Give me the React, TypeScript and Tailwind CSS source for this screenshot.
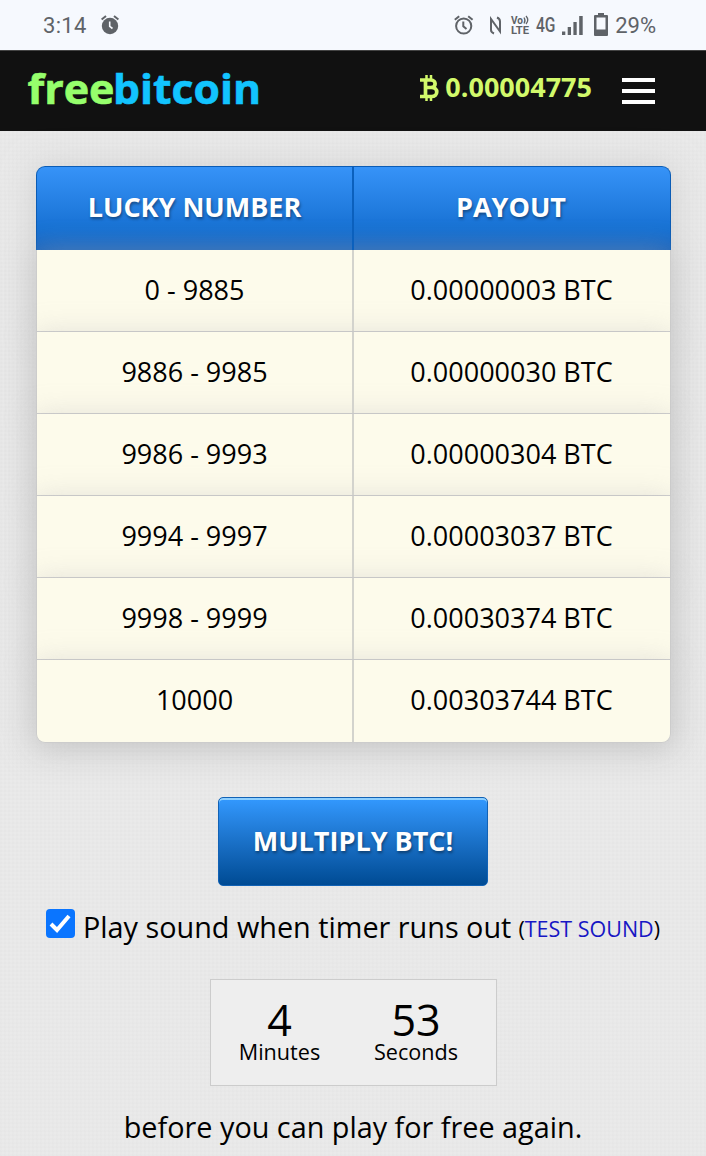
import React from 'react';

const payouts = [
  { range: '0 - 9885', payout: '0.00000003 BTC' },
  { range: '9886 - 9985', payout: '0.00000030 BTC' },
  { range: '9986 - 9993', payout: '0.00000304 BTC' },
  { range: '9994 - 9997', payout: '0.00003037 BTC' },
  { range: '9998 - 9999', payout: '0.00030374 BTC' },
  { range: '10000', payout: '0.00303744 BTC' }
];

const StatusBar = () => (
  <div className="h-[50px] bg-[#f6f9fe] flex items-center justify-between pl-[43px] pr-[50px] text-[#5f6368] font-['Roboto',sans-serif]">
    <div className="flex items-center">
      <span className="text-[22px] leading-none w-[58px] pt-[2px] tracking-[0.3px]">3:14</span>
      <svg width="20" height="20" viewBox="0 0 20 20">
        <circle cx="9" cy="11" r="8.2" fill="currentColor" />
        <path d="M.6 4.500 5 1M17.400 4.500 13 1" stroke="currentColor" strokeWidth="2" />
        <path d="M8.700 6.500V11.300L11.500 13.500" stroke="#f6f9fe" strokeWidth="1.600" fill="none" />
      </svg>
    </div>
    <div className="flex items-center">
      <svg width="20" height="20" viewBox="0 0 20 20" fill="none" stroke="currentColor" strokeWidth="2">
        <circle cx="9.700" cy="11" r="7.600" />
        <path d="M.8 4.800 5.200 1.200M18.600 4.800 14.200 1.200M9.300 6.500V11.300L12.500 14" />
      </svg>
      <svg className="ml-[15px]" width="14" height="19" viewBox="0 0 14 19" fill="none" stroke="currentColor" strokeWidth="2">
        <path d="M5 17.500C2.500 16.500 2 16 2 14V3L11 15.500V5.500C11 3.500 10.500 2.500 8 1.500" />
      </svg>
      <svg className="ml-[7px] overflow-visible" width="20" height="20" viewBox="0 0 20 20" fill="currentColor" fontWeight="700">
        <text x="1" y="9" fontSize="11" textLength="12" lengthAdjust="spacingAndGlyphs">Vo</text>
        <path d="M14 2.500q2 3 0 6M16 1q3.500 4 0 8" fill="none" stroke="currentColor" strokeWidth="1.300" />
        <text x="1" y="19" fontSize="11.5" textLength="18" lengthAdjust="spacingAndGlyphs">LTE</text>
      </svg>
      <svg className="ml-[6px] overflow-visible" width="21" height="20" viewBox="0 0 21 20">
        <text x="0" y="17" fontSize="19.500" fontWeight="500" textLength="19.500" lengthAdjust="spacingAndGlyphs" fill="currentColor">4G</text>
      </svg>
      <svg className="ml-[5px]" width="21" height="19" viewBox="0 0 21 19" fill="currentColor">
        <path d="M0 15.500h3.300v3.500H0zM5.700 11h3.300v8H5.700zM11.400 6h3.300v13h-3.300zM17.200 0h3.500v19h-3.500z" />
      </svg>
      <svg className="ml-[11px]" width="14" height="24" viewBox="0 0 14 24">
        <path d="M4 0h6v2h3a1 1 0 0 1 1 1v19a1 1 0 0 1-1 1H1a1 1 0 0 1-1-1V3a1 1 0 0 1 1-1h3zM2.500 4.500v12h9v-12z" fill="currentColor" fillRule="evenodd" />
      </svg>
      <span className="ml-[7px] text-[22px] leading-none pt-[2px]">29%</span>
    </div>
  </div>
);

const NavBar = () => (
  <header className="h-[81px] bg-[#111] border-t border-[#444] flex items-center justify-between pl-[27px] pr-[51px]">
    <svg width="236" height="60" viewBox="0 0 236 60" className="font-bold" strokeWidth="0.6">
      <text x="0.500" y="42.500" fontSize="40.500" textLength="87" lengthAdjust="spacingAndGlyphs" fill="#96ff6c" stroke="#96ff6c">free</text>
      <text x="86" y="42.500" fontSize="40.500" textLength="148" lengthAdjust="spacingAndGlyphs" fill="#12c4ff" stroke="#12c4ff">bitcoin</text>
    </svg>
    <div className="flex items-center">
      <div className="flex items-center mb-[6px] text-[#d2f96b]">
        <svg width="19" height="26" viewBox="0 0 19 26" fill="none" stroke="currentColor">
          <path d="M0 5h11c5.500 0 5.500 7.500 0 7.500H5h6.500c7 0 7 9 0 9H0M5.500 4.500v17" strokeWidth="3.700" />
          <path d="M6.500 0v4M11 0v4M6.500 22v4M11 22v4" strokeWidth="2.500" />
        </svg>
        <span className="ml-[6px] mb-[4px] text-[27px] leading-none font-bold">0.00004775</span>
      </div>
      <div className="ml-[30px] w-[33px] flex flex-col gap-[7px]">
        <span className="h-[4px] bg-white" />
        <span className="h-[4px] bg-white" />
        <span className="h-[4px] bg-white" />
      </div>
    </div>
  </header>
);

const PayoutTable = () => (
  <div className="mx-[36px] mt-[35px] w-[635px] rounded-[9px] text-center text-[27px] shadow-[0_2px_32px_2px_#bbbbbb80]">
    <div className="grid grid-cols-[317px_1fr] h-[84px] rounded-t-[9px] border border-b-0 border-[#0b5cb5] bg-linear-to-b from-[#3693f8] via-[#1671d3] via-75% to-[#1763bd] text-white font-bold text-shadow-[1px_2px_3px_#0006]">
      <div className="flex items-center justify-center border-r-2 border-[#0b60bd] pb-[3px]">LUCKY NUMBER</div>
      <div className="flex items-center justify-center pb-[3px] pr-[2px]">PAYOUT</div>
    </div>
    {payouts.map((row) => (
      <div
        key={row.range}
        className="grid grid-cols-[317px_1fr] h-[82.1px] border-x border-b border-[#ccc] bg-[#fdfbeb] last:rounded-b-[9px] shadow-[0_4px_30px_2px_#bbbbbb70]"
      >
        <div className="flex items-center justify-center border-r-2 border-[#d3d3cd] pb-px">{row.range}</div>
        <div className="flex items-center justify-center pb-px pr-px">{row.payout}</div>
      </div>
    ))}
  </div>
);

const Timer = () => (
  <div className="mt-[33px] flex w-[287px] h-[107px] border border-[#ccc] bg-[#eee] px-[1px] pt-[10px] text-center">
    <div className="w-[136px]">
      <div className="text-[43px] leading-[59px]">4</div>
      <div className="-mt-[12px] text-[21.6px] leading-[29px]">Minutes</div>
    </div>
    <div className="w-[137px]">
      <div className="text-[43px] leading-[59px]">53</div>
      <div className="-mt-[12px] text-[21.6px] leading-[29px]">Seconds</div>
    </div>
  </div>
);

export default function App() {
  return (
    <div className="w-[706px] h-[1156px] overflow-hidden bg-[#eaeaea] bg-[repeating-linear-gradient(0deg,#00000002_0_2px,transparent_2px_4px),repeating-linear-gradient(90deg,#00000002_0_2px,transparent_2px_4px)] text-black font-['Open_Sans','Noto_Sans',sans-serif]">
      <StatusBar />
      <NavBar />
      <PayoutTable />
      <div className="flex flex-col items-center">
        <button className="mt-[54px] w-[270px] h-[89px] rounded-[5px] border border-[#1262b5] bg-linear-to-b from-[#3399ff] to-[#004b94] text-white font-bold text-[27px] shadow-[inset_0_2px_0_#8fd0ff] text-shadow-[1px_2px_3px_#0006]">
          MULTIPLY BTC!
        </button>
        <label className="mt-[22px] flex items-center h-[38px] whitespace-nowrap">
          <span className="mb-[6px] w-[29px] h-[29px] rounded-[4px] bg-[#0a75ff] flex items-center justify-center">
            <svg width="23" height="21" viewBox="0 0 23 21" fill="none" stroke="#fff" strokeWidth="4">
              <path d="M2 11 8 17 20 3" />
            </svg>
          </span>
          <span className="ml-[8px] text-[28.8px]">Play sound when timer runs out</span>
          <span className="ml-[7px] pt-[6px] text-[21.5px]">
            (<a className="text-[#1717c4]">TEST SOUND</a>)
          </span>
        </label>
        <Timer />
        <p className="mt-[21px] text-[28.8px] leading-[40px]">before you can play for free again.</p>
      </div>
    </div>
  );
}
